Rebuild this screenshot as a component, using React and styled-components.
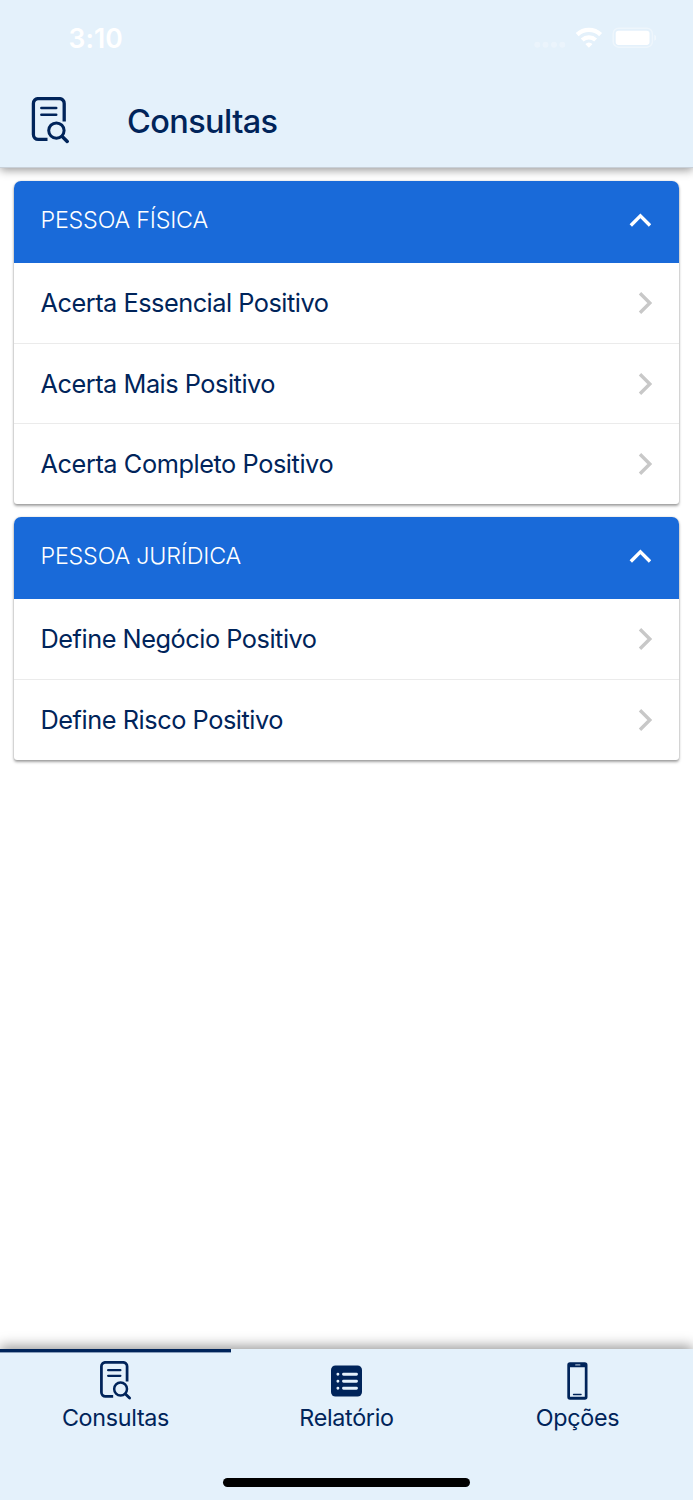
import React from 'react';
import styled, { createGlobalStyle } from 'styled-components';

const navy = '#00245a';
const sky = '#e4f1fb';

const GlobalStyle = createGlobalStyle`
  * { box-sizing: border-box; }
  body {
    margin: 0;
    background: #fff;
    color: ${navy};
    font-family: Inter, "Liberation Sans", sans-serif;
  }
`;

const Screen = styled.div`
  display: flex;
  flex-direction: column;
  height: 1500px;
  overflow: hidden;
`;

const Header = styled.header`
  flex: none;
  height: 168px;
  background: ${sky};
  border-bottom: 1px solid #c8d0d8;
  box-shadow: 0 2px 9px rgba(0, 0, 0, 0.42);
`;

const StatusBar = styled.div`
  display: flex;
  align-items: center;
  justify-content: space-between;
  height: 76px;
  padding: 0 37px 0 68.5px;
  color: #fff;
`;

const Clock = styled.span`
  font-size: 26.5px;
  font-weight: 600;
  line-height: 32px;
  letter-spacing: 0.1px;
`;

const StatusIcons = styled.svg`
  display: block;
  width: 123px;
  height: 24px;
`;

const TitleBar = styled.div`
  display: flex;
  align-items: center;
  height: 90px;
  padding-left: 31px;
`;

const Title = styled.h1`
  margin: 1px 0 0 58px;
  font-size: 32.5px;
  font-weight: 500;
  line-height: 40px;
  letter-spacing: -0.6px;
`;

const Content = styled.main`
  flex: 1;
  display: flex;
  flex-direction: column;
  gap: 13.4px;
  padding: 13px 14px 0;
`;

const Card = styled.section`
  padding-bottom: 0.3px;
  border-radius: 7px 7px 3px 3px;
  background: #fff;
  box-shadow: 0 2px 3px rgba(0, 0, 0, 0.36), 0 0 2px rgba(0, 0, 0, 0.18);
  overflow: hidden;
`;

const CardHeader = styled.div`
  display: flex;
  align-items: center;
  justify-content: space-between;
  height: 82px;
  padding: 0 28px 4px 26.5px;
  background: #196ad9;
  color: #fff;
`;

const CardTitle = styled.h2`
  margin: 0;
  font-size: 23.3px;
  font-weight: 300;
  line-height: 30px;
  letter-spacing: -0.2px;
`;

const Row = styled.div`
  display: flex;
  align-items: center;
  justify-content: space-between;
  height: 80.2px;
  padding: 0 27px 0 26.5px;
  font-size: 25.3px;
  letter-spacing: ${({ $spacing }) => $spacing};

  & + & {
    border-top: 1px solid #ebebeb;
  }
`;

const RowLabel = styled.span`
  margin-bottom: 1.5px;
`;

const Icon = styled.svg`
  display: block;
  flex: none;
  width: ${({ $w }) => $w}px;
  height: ${({ $h }) => $h}px;
  fill: none;
  stroke: currentColor;
`;

const RowChevron = styled(Icon)`
  color: #c8c8c8;
`;

const TabBar = styled.nav`
  flex: none;
  display: grid;
  grid-template-columns: repeat(3, 1fr);
  grid-template-rows: 129px 8px;
  height: 151px;
  background: ${sky};
  box-shadow: 0 -3px 12px rgba(0, 0, 0, 0.4);
`;

const Tab = styled.div`
  display: flex;
  flex-direction: column;
  align-items: center;
  height: 90px;
  padding-top: 9px;
  border-top: 3px solid ${({ $active }) => ($active ? navy : 'transparent')};
  box-shadow: inset 0 1px ${({ $active }) => ($active ? 'rgba(0, 36, 90, 0.4)' : 'transparent')};
`;

const TabIcon = styled.span`
  display: flex;
  align-items: center;
  justify-content: center;
  height: 40px;
`;

const TabLabel = styled.span`
  margin-top: 2px;
  font-size: 23.3px;
  line-height: 30px;
  letter-spacing: -0.3px;
`;

const HomeIndicator = styled.div`
  grid-column: 1 / -1;
  justify-self: center;
  width: 247px;
  height: 8.5px;
  border-radius: 5px;
  background: #000;
`;

const SearchDocument = ({ width, height, viewBox = '0 0 38 48' }) => (
  <Icon $w={width} $h={height} viewBox={viewBox} strokeLinecap="round">
    <path d="M33.2 24.6V6.4a4.8 4.8 0 0 0-4.8-4.8H7.2a4.8 4.8 0 0 0-4.8 4.8v31.2a4.8 4.8 0 0 0 4.8 4.8h9.3" strokeWidth="3.3" strokeLinecap="butt" />
    <path d="M10.4 11h14.8M10.4 17.8h14.8" strokeWidth="2.6" />
    <circle cx="25.4" cy="33.6" r="7.7" strokeWidth="3" />
    <path d="m31.2 39.6 5 4.8" strokeWidth="3.5" />
  </Icon>
);

const ListIcon = () => (
  <Icon $w={32} $h={32} viewBox="0.5 0 32 32">
    <rect x=".5" y=".5" width="31" height="31" rx="4.5" fill="currentColor" stroke="none" />
    <path d="M13 9.2h13M13 16.2h13M13 23.3h13M7.4 9.2h.02M7.4 16.2h.02M7.4 23.3h.02" stroke={sky} strokeWidth="2.9" strokeLinecap="round" />
  </Icon>
);

const PhoneIcon = () => (
  <Icon $w={22} $h={38} viewBox="0.3 0 22 38">
    <path fillRule="evenodd" d="M3.3.3h14.8a2.7 2.7 0 0 1 2.7 2.7v32a2.7 2.7 0 0 1-2.7 2.7H3.3A2.7 2.7 0 0 1 .6 35V3A2.7 2.7 0 0 1 3.3.3ZM3.3 5.3v29.4h14.8V5.3Z" fill="currentColor" stroke="none" />
    <path d="M9 2.9h4.2" stroke="#9cb0c8" strokeWidth="1.1" strokeLinecap="round" />
    <path d="M6.8 32.5h7.6" strokeWidth="1.3" strokeLinecap="round" />
  </Icon>
);

const sections = [
  {
    title: 'PESSOA FÍSICA',
    items: [
      ['Acerta Essencial Positivo', '-0.48px'],
      ['Acerta Mais Positivo', '-0.47px'],
      ['Acerta Completo Positivo', '-0.42px'],
    ],
  },
  {
    title: 'PESSOA JURÍDICA',
    items: [
      ['Define Negócio Positivo', '-0.46px'],
      ['Define Risco Positivo', '-0.44px'],
    ],
  },
];

export default function App() {
  return (
    <Screen>
      <GlobalStyle />
      <Header>
        <StatusBar>
          <Clock>3:10</Clock>
          <StatusIcons viewBox="533 26 123 24" fill="none">
            <g fill="#fff" opacity=".28">
              <circle cx="537.3" cy="44.7" r="3" />
              <circle cx="545.5" cy="44.7" r="3" />
              <circle cx="554" cy="44.7" r="3" />
              <circle cx="562.3" cy="44.7" r="3" />
            </g>
            <path d="M577.2 34.6a17 17 0 0 1 23.4 0M582.2 40a10 10 0 0 1 13.4 0" stroke="#fff" strokeWidth="4.3" />
            <path d="M585.3 44.1a5.4 5.4 0 0 1 7.2 0L588.9 47.7Z" fill="#fff" />
            <rect x="613.2" y="28.2" width="39.2" height="19" rx="5.5" stroke="#fff" strokeWidth="1.5" opacity=".38" />
            <rect x="615.7" y="30.7" width="33.8" height="14.2" rx="2.8" fill="#fff" />
            <path d="M654.3 34.8q2.1.8 2.1 3t-2.1 3Z" fill="#fff" opacity=".45" />
          </StatusIcons>
        </StatusBar>
        <TitleBar>
          <SearchDocument width={38} height={48} />
          <Title>Consultas</Title>
        </TitleBar>
      </Header>
      <Content>
        {sections.map(({ title, items }) => (
          <Card key={title}>
            <CardHeader>
              <CardTitle>{title}</CardTitle>
              <Icon $w={22} $h={14} viewBox="-0.3 -0.2 22 14" strokeWidth="3.4">
                <path d="m1.5 12.3 9.6-9.6 9.6 9.6" />
              </Icon>
            </CardHeader>
            {items.map(([label, spacing]) => (
              <Row key={label} $spacing={spacing}>
                <RowLabel>{label}</RowLabel>
                <RowChevron $w={14} $h={22} viewBox="0 0 14 22" strokeWidth="3.4">
                  <path d="m2 1.3 9.8 9.7L2 20.7" />
                </RowChevron>
              </Row>
            ))}
          </Card>
        ))}
      </Content>
      <TabBar>
        <Tab $active>
          <TabIcon><SearchDocument width={32} height={40} viewBox="0.9 0 38 48" /></TabIcon>
          <TabLabel>Consultas</TabLabel>
        </Tab>
        <Tab>
          <TabIcon><ListIcon /></TabIcon>
          <TabLabel>Relatório</TabLabel>
        </Tab>
        <Tab>
          <TabIcon><PhoneIcon /></TabIcon>
          <TabLabel>Opções</TabLabel>
        </Tab>
        <HomeIndicator />
      </TabBar>
    </Screen>
  );
}
